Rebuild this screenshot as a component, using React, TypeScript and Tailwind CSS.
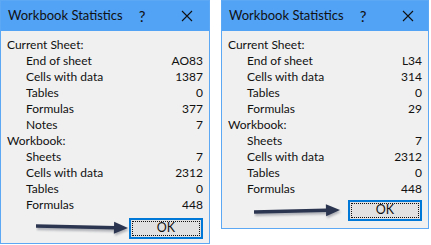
import React from "react";

type Row = { label: string; value?: string; heading?: boolean };

interface DialogProps {
  rows: Row[];
  width: string;
  height: string;
  buttonGap: string;
  arrow: { x1: number; y1: number; x2: number; y2: number; w: number };
}

const leftRows: Row[] = [
  { label: "Current Sheet:", heading: true },
  { label: "End of sheet", value: "AO83" },
  { label: "Cells with data", value: "1387" },
  { label: "Tables", value: "0" },
  { label: "Formulas", value: "377" },
  { label: "Notes", value: "7" },
  { label: "Workbook:", heading: true },
  { label: "Sheets", value: "7" },
  { label: "Cells with data", value: "2312" },
  { label: "Tables", value: "0" },
  { label: "Formulas", value: "448" },
];

const rightRows: Row[] = [
  { label: "Current Sheet:", heading: true },
  { label: "End of sheet", value: "L34" },
  { label: "Cells with data", value: "314" },
  { label: "Tables", value: "0" },
  { label: "Formulas", value: "29" },
  { label: "Workbook:", heading: true },
  { label: "Sheets", value: "7" },
  { label: "Cells with data", value: "2312" },
  { label: "Tables", value: "0" },
  { label: "Formulas", value: "448" },
];

// annotation arrow pointing at the OK button
const Arrow = ({ x1, y1, x2, y2, w }: DialogProps["arrow"]) => {
  const ang = Math.atan2(y2 - y1, x2 - x1);
  const hx = x2 - Math.cos(ang) * 14;
  const hy = y2 - Math.sin(ang) * 14;
  const nx = -Math.sin(ang) * 6;
  const ny = Math.cos(ang) * 6;
  return (
    <svg width={w} height="22" viewBox={`0 0 ${w} 22`} className="shrink-0">
      <defs>
        <filter id="sh" x="-10%" y="-50%" width="120%" height="200%">
          <feGaussianBlur stdDeviation="1.2" />
        </filter>
      </defs>
      <g opacity="0.35" filter="url(#sh)" transform="translate(1 2)">
        <line x1={x1} y1={y1} x2={hx} y2={hy} stroke="#33394a" strokeWidth="4" />
        <polygon points={`${x2},${y2} ${hx + nx},${hy + ny} ${hx - nx},${hy - ny}`} fill="#33394a" />
      </g>
      <line x1={x1} y1={y1} x2={hx + 1} y2={hy} stroke="#2b3550" strokeWidth="3.5" />
      <polygon points={`${x2},${y2} ${hx + nx},${hy + ny} ${hx - nx},${hy - ny}`} fill="#2b3550" />
    </svg>
  );
};

const Dialog = ({ rows, width, height, buttonGap, arrow }: DialogProps) => (
  <div className={`flex ${width} ${height} shrink-0 flex-col border border-[#5da8f5] bg-[#f0f0f0]`}>
    <div className="flex h-[30px] shrink-0 items-center bg-[#52a2f6] pl-[7px] text-[#111]">
      <span className="w-[128px] shrink-0 whitespace-nowrap text-[13px]">Workbook Statistics</span>
      <span className="w-[12px] shrink-0 text-center text-[15px]">?</span>
      <svg width="12" height="12" viewBox="0 0 12 12" className="ml-[33px] shrink-0">
        <path d="M1 1 L11 11 M11 1 L1 11" stroke="#111" strokeWidth="1.1" />
      </svg>
    </div>
    <div className="flex flex-col px-[6px] pt-[6px] text-[12px] text-[#111]">
      {rows.map((r, i) => (
        <div key={i} className={`flex h-[16px] items-center justify-between whitespace-nowrap ${r.heading ? "" : "pl-[19px]"}`}>
          <span>{r.label}</span>
          {r.value && <span>{r.value}</span>}
        </div>
      ))}
      <div className={`flex items-center justify-end ${buttonGap}`}>
        <Arrow {...arrow} />
        <button className="flex h-[21px] w-[74px] items-center justify-center border-2 border-[#0078d7] bg-[#e1e1e1] p-[1px] text-[12.5px] text-[#111]">
          <span className="flex h-full w-full items-center justify-center border border-dotted border-[#111]">OK</span>
        </button>
      </div>
    </div>
  </div>
);

export default function App() {
  return (
    <div className="flex h-[245px] w-[431px] items-start gap-[11px] bg-white font-['Lato',sans-serif]">
      <Dialog
        rows={leftRows}
        width="w-[210px]"
        height="h-[244px]"
        buttonGap="mt-[4px]"
        arrow={{ x1: 0, y1: 9, x2: 92, y2: 11, w: 93 }}
      />
      <Dialog
        rows={rightRows}
        width="w-[208px]"
        height="h-[229px]"
        buttonGap="mt-[2px]"
        arrow={{ x1: 0, y1: 13, x2: 86, y2: 11, w: 94 }}
      />
    </div>
  );
}
